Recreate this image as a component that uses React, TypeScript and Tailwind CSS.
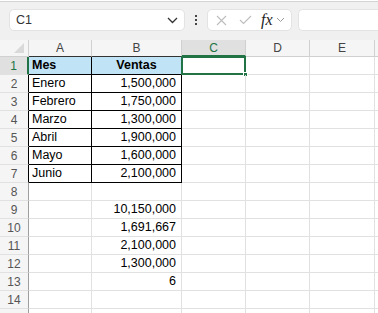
import React from "react";

// Columnas de la hoja: ancho en px (incluye el borde derecho)
const cols = [
  { id: "A", w: "w-[63px]" },
  { id: "B", w: "w-[90px]" },
  { id: "C", w: "w-[64px]" },
  { id: "D", w: "w-[64px]" },
  { id: "E", w: "w-[65px]" },
];

const datos: [string, string][] = [
  ["Enero", "1,500,000"],
  ["Febrero", "1,750,000"],
  ["Marzo", "1,300,000"],
  ["Abril", "1,900,000"],
  ["Mayo", "1,600,000"],
  ["Junio", "2,100,000"],
];

const resumen: Record<number, string> = {
  9: "10,150,000",
  10: "1,691,667",
  11: "2,100,000",
  12: "1,300,000",
  13: "6",
};

const FormulaBar: React.FC = () => (
  <div className="bg-[#f0f0f0]">
    <div className="h-[1px] bg-white" />
    <div className="h-[1px] bg-[#d4d4d4]" />
    <div className="flex items-center h-[38px] pl-[9px] pb-[2px]">
      {/* Cuadro de nombres */}
      <div className="flex items-center justify-between w-[176px] h-[22px] bg-white rounded-[5px] border border-[#e3e3e3] pl-[6px] pr-[6px]">
        <span className="text-[12.5px] text-[#333]">C1</span>
        <svg width="11" height="7" viewBox="0 0 11 7" fill="none">
          <path d="M1 1l4.5 4.5L10 1" stroke="#333" strokeWidth="1.3" />
        </svg>
      </div>
      {/* Separador de puntos */}
      <div className="flex flex-col items-center justify-center gap-[2px] w-[22px]">
        <span className="w-[2px] h-[2px] bg-[#444]" />
        <span className="w-[2px] h-[2px] bg-[#444]" />
        <span className="w-[2px] h-[2px] bg-[#444]" />
      </div>
      {/* Botones de fórmula */}
      <div className="flex items-center w-[85px] h-[22px] bg-white rounded-[5px] border border-[#e3e3e3] pl-[8px]">
        <svg width="11" height="11" viewBox="0 0 11 11" fill="none">
          <path d="M1 1l9 9M10 1l-9 9" stroke="#bdbdbd" strokeWidth="1.1" />
        </svg>
        <svg width="13" height="10" viewBox="0 0 13 10" fill="none" className="ml-[12px]">
          <path d="M1 5l3.5 3.5L12 1" stroke="#bdbdbd" strokeWidth="1.1" />
        </svg>
        <span className="ml-[9px] text-[16px] italic text-[#222] leading-none font-['Liberation_Serif',serif]">
          fx
        </span>
        <svg width="9" height="6" viewBox="0 0 9 6" fill="none" className="ml-[3px]">
          <path d="M1 1l3.5 3.5L8 1" stroke="#9a9a9a" strokeWidth="1" />
        </svg>
      </div>
      {/* Barra de fórmulas */}
      <div className="flex-1 h-[22px] bg-white rounded-l-[5px] border border-r-0 border-[#e3e3e3] ml-[6px]" />
    </div>
  </div>
);

const App: React.FC = () => {
  const filas = Array.from({ length: 14 }, (_, i) => i + 1);

  return (
    <div className="w-[378px] h-[313px] overflow-hidden bg-white font-['Liberation_Sans',Arial,sans-serif]">
      <FormulaBar />

      {/* Encabezados de columnas */}
      <div className="flex h-[17px] bg-[#f5f5f5]">
        <div className="relative w-[29px] shrink-0 border-r border-b border-[#d0d0d0]">
          <div className="absolute right-[4px] bottom-[3px] w-0 h-0 border-l-[10px] border-l-transparent border-b-[10px] border-b-[#d9d9d9]" />
        </div>
        {cols.map((c) => (
          <div
            key={c.id}
            className={`${c.w} shrink-0 flex items-center justify-center text-[12px] border-r ${
              c.id === "C"
                ? "bg-[#e0e0e0] text-[#217346] border-b-2 border-b-[#217346] border-r-[#d0d0d0]"
                : c.id === "A" || c.id === "B"
                ? "text-[#444] border-b border-b-[#333] border-r-[#d0d0d0]"
                : "text-[#444] border-b border-[#d0d0d0]"
            }`}
          >
            {c.id}
          </div>
        ))}
        <div className="flex-1 border-b border-[#d0d0d0]" />
      </div>

      {/* Filas */}
      {filas.map((f) => {
        const enTabla = f <= 7;
        const encabezado = f === 1;
        let a = "";
        let b = "";
        if (encabezado) {
          a = "Mes";
          b = "Ventas";
        } else if (enTabla) {
          a = datos[f - 2][0];
          b = datos[f - 2][1];
        } else if (resumen[f]) {
          b = resumen[f];
        }
        const cellTabla = enTabla
          ? "border-r border-b border-black"
          : "border-r border-b border-[#e1e1e1]";
        return (
          <div key={f} className="flex h-[18px] text-[12.5px] text-black">
            <div
              className={`w-[29px] shrink-0 flex items-center justify-center text-[12px] border-b border-b-[#e1e1e1] ${
                encabezado
                  ? "bg-[#e0e0e0] text-[#217346] border-r-2 border-r-[#217346]"
                  : enTabla
                  ? "bg-[#f5f5f5] text-[#555] border-r border-r-black"
                  : "bg-[#f5f5f5] text-[#555] border-r border-r-[#9e9e9e]"
              }`}
            >
              {f}
            </div>
            <div
              className={`w-[63px] shrink-0 flex items-center pl-[3px] ${cellTabla} ${
                encabezado ? "bg-[#c0e4f5] font-bold" : ""
              }`}
            >
              {a}
            </div>
            <div
              className={`w-[90px] shrink-0 flex items-center ${cellTabla} ${
                encabezado
                  ? "bg-[#c0e4f5] font-bold justify-center"
                  : "justify-end pr-[5px]"
              }`}
            >
              {b}
            </div>
            <div className="relative w-[64px] shrink-0 border-r border-b border-[#e1e1e1]">
              {encabezado && (
                <>
                  <div className="absolute -left-[1px] -top-[1px] w-[65px] h-[19px] border-2 border-[#217346]" />
                  <div className="absolute -right-[3px] -bottom-[3px] w-[5px] h-[5px] bg-[#217346] border border-white" />
                </>
              )}
            </div>
            <div className="w-[64px] shrink-0 border-r border-b border-[#e1e1e1]" />
            <div className="w-[65px] shrink-0 border-r border-b border-[#e1e1e1]" />
            <div className="flex-1 border-b border-[#e1e1e1]" />
          </div>
        );
      })}

      {/* Fila 15, apenas visible */}
      <div className="flex h-[18px]">
        <div className="w-[29px] shrink-0 bg-[#f5f5f5] border-r border-r-[#9e9e9e]" />
        <div className="w-[63px] shrink-0 border-r border-[#e1e1e1]" />
        <div className="w-[90px] shrink-0 border-r border-[#e1e1e1]" />
        <div className="w-[64px] shrink-0 border-r border-[#e1e1e1]" />
        <div className="w-[64px] shrink-0 border-r border-[#e1e1e1]" />
        <div className="w-[65px] shrink-0 border-r border-[#e1e1e1]" />
      </div>
    </div>
  );
};

export default App;
